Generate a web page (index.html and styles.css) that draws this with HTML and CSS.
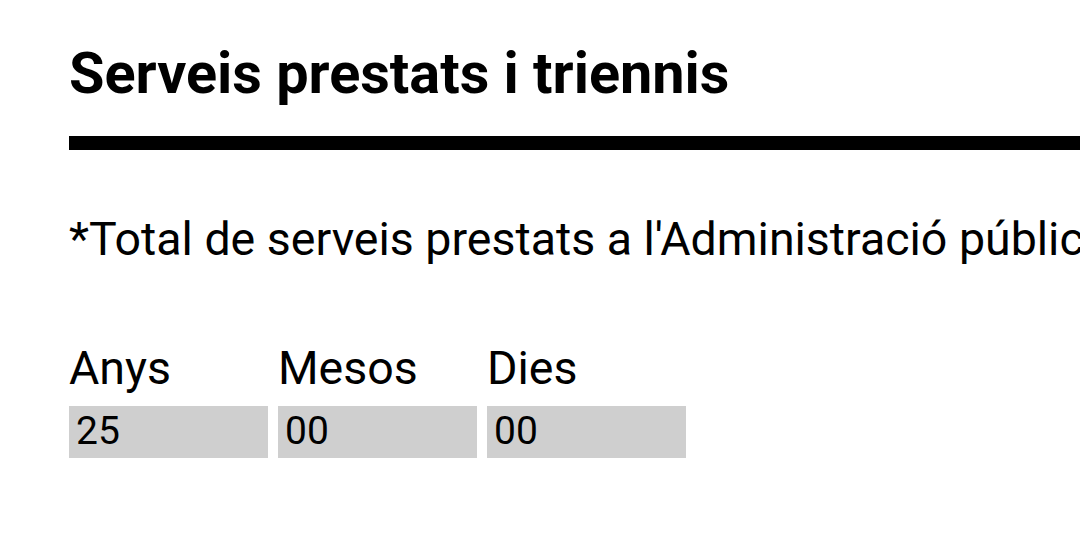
FILE: index.html
```html
<!DOCTYPE html>
<html lang="ca">
<head>
<meta charset="utf-8">
<title>Serveis prestats i triennis</title>
<link rel="stylesheet" href="styles.css">
</head>
<body>
<main class="page">
  <h1 class="title">Serveis prestats i triennis</h1>
  <div class="rule"></div>
  <p class="intro">*Total de serveis prestats a l'Administració pública</p>
  <div class="fields">
    <div class="field">
      <label class="label" for="anys">Anys</label>
      <input class="box" id="anys" type="text" value="25" readonly>
    </div>
    <div class="field">
      <label class="label" for="mesos">Mesos</label>
      <input class="box" id="mesos" type="text" value="00" readonly>
    </div>
    <div class="field">
      <label class="label" for="dies">Dies</label>
      <input class="box" id="dies" type="text" value="00" readonly>
    </div>
  </div>
</main>
</body>
</html>
```
FILE: styles.css
```css
html, body {
  margin: 0;
  padding: 0;
  background: #fff;
  overflow: hidden;
}
body {
  font-family: Roboto, "Noto Sans", sans-serif;
  color: #000;
}
.page {
  padding: 40px 0 0 69px;
  white-space: nowrap;
}
.title {
  margin: 0;
  font-size: 57.6px;
  font-weight: 700;
  line-height: normal;
}
.rule {
  margin-top: 29px;
  height: 14px;
  background: #000;
}
.intro {
  margin: 62px 0 0;
  font-size: 46.5px;
  font-weight: 400;
  line-height: normal;
}
.fields {
  display: flex;
  gap: 10px;
  margin-top: 75px;
}
.field {
  display: flex;
  flex-direction: column;
  width: 199px;
}
.label {
  font-size: 46.5px;
  line-height: normal;
}
.box {
  margin-top: 11px;
  box-sizing: border-box;
  width: 199px;
  height: 52px;
  padding: 0 8px 2px 7px;
  border: none;
  outline: none;
  background: #cfcfcf;
  font-family: Roboto, "Noto Sans", sans-serif;
  font-size: 39px;
  color: #000;
}
```
